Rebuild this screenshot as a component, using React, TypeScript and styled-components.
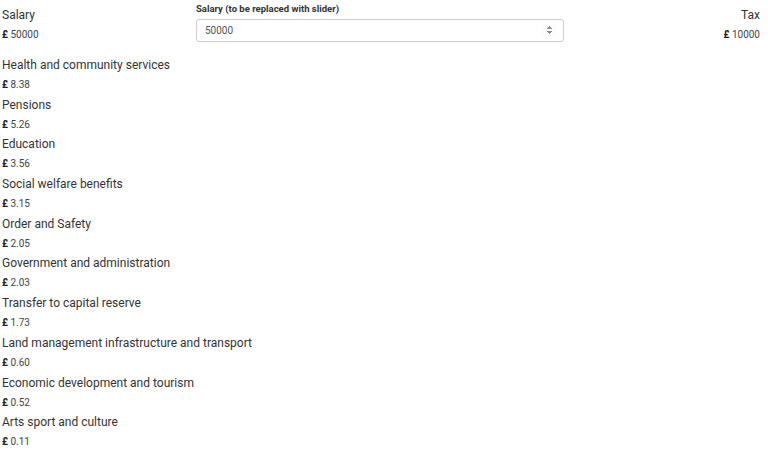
import styled, { createGlobalStyle } from "styled-components";

const GlobalStyle = createGlobalStyle`
  body {
    margin: 0;
    background: #ffffff;
    font-family: Roboto, "Liberation Sans", sans-serif;
    color: #333333;
  }
`;

interface Spend {
  name: string;
  amount: string;
}

const spending: Spend[] = [
  { name: "Health and community services", amount: "8.38" },
  { name: "Pensions", amount: "5.26" },
  { name: "Education", amount: "3.56" },
  { name: "Social welfare benefits", amount: "3.15" },
  { name: "Order and Safety", amount: "2.05" },
  { name: "Government and administration", amount: "2.03" },
  { name: "Transfer to capital reserve", amount: "1.73" },
  { name: "Land management infrastructure and transport", amount: "0.60" },
  { name: "Economic development and tourism", amount: "0.52" },
  { name: "Arts sport and culture", amount: "0.11" },
];

const Wrapper = styled.div`
  padding: 0 8px 0 2px;
`;

const Header = styled.div`
  display: grid;
  grid-template-columns: 194px 368px 1fr;
  height: 56px;
`;

const Side = styled.div<{ $right?: boolean }>`
  display: flex;
  flex-direction: column;
  align-items: ${(p) => (p.$right ? "flex-end" : "flex-start")};
  padding-top: 6px;
`;

const Title = styled.span`
  font-size: 12px;
  line-height: 19px;
  color: #333;
`;

const Value = styled.span`
  font-size: 10px;
  line-height: 20px;
  color: #444;
  b {
    font-weight: 700;
    color: #222;
  }
`;

const Field = styled.div`
  display: flex;
  flex-direction: column;
  padding-top: 2px;
`;

const Label = styled.label`
  font-size: 9.5px;
  font-weight: 700;
  color: #333;
  line-height: 14px;
  margin-bottom: 3px;
`;

const Input = styled.input`
  box-sizing: border-box;
  height: 23px;
  width: 100%;
  border: 1px solid #cccccc;
  border-radius: 3px;
  padding: 0 6px 0 8px;
  font-family: Roboto, "Liberation Sans", sans-serif;
  font-size: 10px;
  color: #555;
  outline: none;
  &::-webkit-inner-spin-button {
    opacity: 1;
  }
`;

const List = styled.div`
  display: flex;
  flex-direction: column;
`;

const Item = styled.div`
  display: flex;
  flex-direction: column;
  height: 39.7px;
`;

export default function App() {
  return (
    <Wrapper>
      <GlobalStyle />
      <Header>
        <Side>
          <Title>Salary</Title>
          <Value>
            <b>£</b> 50000
          </Value>
        </Side>
        <Field>
          <Label>Salary (to be replaced with slider)</Label>
          <Input type="number" defaultValue={50000} />
        </Field>
        <Side $right>
          <Title>Tax</Title>
          <Value>
            <b>£</b> 10000
          </Value>
        </Side>
      </Header>
      <List>
        {spending.map((s) => (
          <Item key={s.name}>
            <Title>{s.name}</Title>
            <Value>
              <b>£</b> {s.amount}
            </Value>
          </Item>
        ))}
      </List>
    </Wrapper>
  );
}
